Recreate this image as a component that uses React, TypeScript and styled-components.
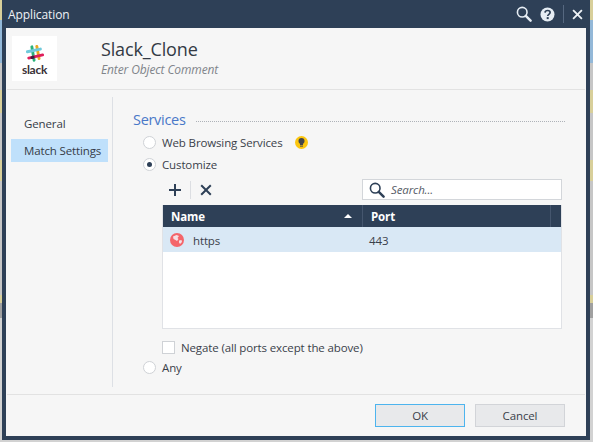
import React from "react";
import styled, { createGlobalStyle } from "styled-components";

const Global = createGlobalStyle`
  html, body { margin: 0; padding: 0; height: 442px; overflow: hidden; }
  body {
    font-family: "Open Sans", "Noto Sans", sans-serif;
    background: linear-gradient(to bottom,
      #d8cf9a 0 20px, #93b8d8 20px 63px, #c6c6c6 63px 90px, #d8cf9a 90px 113px,
      #c6c6c6 113px 160px, #d8cf9a 160px 181px, #c6c6c6 181px 295px, #d8cf9a 295px 303px,
      #a0a0a0 303px 318px, #d2d2d2 318px 442px);
  }
`;

const navy = "#2e4057";

const Dialog = styled.div`
  width: 588px; height: 440px; margin-left: 2px;
  box-sizing: border-box;
  background: ${navy};
  padding: 0 4px 4px;
  display: flex; flex-direction: column;
  color: #3a3f4a; font-size: 11.5px; letter-spacing: -0.13px;
`;
const TitleBar = styled.div`
  height: 28px; flex: none;
  display: flex; align-items: center;
  color: #eef2f6; font-size: 12px; padding-left: 2px; padding-right: 3px;
`;
const TitleText = styled.span`flex: 1; letter-spacing: -0.1px;`;
const TitleIcons = styled.div`display: flex; align-items: center; gap: 8px;`;
const TitleSep = styled.div`width: 1px; height: 18px; background: #566880;`;
const Surface = styled.div`
  flex: 1; min-height: 0; background: #f6f6f6;
  display: flex; flex-direction: column;
`;
const Header = styled.div`
  height: 62px; flex: none; box-sizing: border-box;
  margin: 0 1px; border-bottom: 1px solid #e2e2e2;
  padding: 8px 0 0 5px;
  display: flex; gap: 44px;
`;
const LogoBox = styled.div`
  width: 45px; height: 45px; background: #fff;
  display: flex; flex-direction: column; align-items: center; padding-top: 9px; box-sizing: border-box;
`;
const LogoWord = styled.span`
  font-family: "Lato", sans-serif; font-weight: 700; font-size: 12px; line-height: 11px;
  color: #3b3238; letter-spacing: -0.3px; margin-top: 1px;
`;
const HeaderText = styled.div`display: flex; flex-direction: column;`;
const ObjName = styled.div`font-size: 18px; line-height: 26px; color: #333a44; letter-spacing: -0.15px;`;
const ObjComment = styled.div`font-size: 12px; line-height: 15px; font-style: italic; color: #80848a; letter-spacing: -0.12px;`;
const Main = styled.div`flex: 1; min-height: 0; display: flex; padding-top: 7px;`;
const Sidebar = styled.div`
  width: 97px; flex: none; margin-left: 5px; margin-right: 4px;
  display: flex; flex-direction: column; padding-top: 15px;
`;
const NavItem = styled.div<{ $active?: boolean }>`
  height: 23px; box-sizing: border-box; display: flex; align-items: center; padding-left: 13px;
  white-space: nowrap; color: #363c47;
  background: ${(p) => (p.$active ? "#bfe0fb" : "transparent")};
  & + & { margin-top: 4px; }
`;
const Content = styled.div`
  flex: 1; min-width: 0; height: 290px; box-sizing: border-box;
  border-left: 1px solid #dde0e5;
  padding: 13px 21px 0 20px;
  display: flex; flex-direction: column;
`;
const SectionHead = styled.div`display: flex; align-items: center; gap: 10px; height: 20px; margin-bottom: 1px;`;
const SectionTitle = styled.div`font-size: 14.5px; line-height: 20px; color: #4a78c8; letter-spacing: -0.3px;`;
const Dots = styled.div`flex: 1; border-top: 1px dotted #aeb2b8; margin-top: 2px;`;
const RadioRow = styled.div`
  height: 22px; margin-left: 10px; display: flex; align-items: center; gap: 6px; white-space: nowrap;
`;
const AnyRow = styled(RadioRow)`height: 14px;`;
const Radio = styled.span<{ $on?: boolean }>`
  width: 13px; height: 13px; box-sizing: border-box; border-radius: 50%; flex: none;
  border: 1px solid #cfd2d6; background: #fff; display: flex; align-items: center; justify-content: center;
  &::after { content: ""; width: 5px; height: 5px; border-radius: 50%; background: ${(p) => (p.$on ? navy : "transparent")}; }
`;
const Bulb = styled.svg`margin-left: 6px; flex: none;`;
const Nested = styled.div`margin: 0 3px 0 29px; display: flex; flex-direction: column;`;
const Toolbar = styled.div`display: flex; align-items: center; height: 21px; margin-top: 4px;`;
const ToolGroup = styled.div`flex: 1; display: flex; align-items: center; padding-left: 7px; gap: 9px;`;
const ToolSep = styled.div`width: 1px; height: 18px; background: #dcdee2;`;
const SearchBox = styled.div`
  width: 200px; height: 21px; box-sizing: border-box; background: #fff;
  border: 1px solid #d3d6da; display: flex; align-items: center; padding-left: 6px; gap: 6px;
`;
const SearchText = styled.span`font-style: italic; color: #555b66;`;
const Table = styled.div`
  height: 124px; margin-top: 5px; box-sizing: border-box; background: #fff;
  border: 1px solid #e0e2e6; border-top: 0;
  display: flex; flex-direction: column;
`;
const HeadRow = styled.div`
  height: 22px; background: ${navy}; color: #fff; font-weight: 700;
  display: grid; grid-template-columns: 200px 188px 1fr; align-items: stretch;
`;
const HeadCell = styled.div`
  display: flex; align-items: center; justify-content: space-between;
  padding: 0 10px 0 8px; border-right: 1px solid #45566e;
  &:last-child { border-right: 0; }
`;
const SortUp = styled.span`
  width: 0; height: 0; border-left: 4px solid transparent; border-right: 4px solid transparent;
  border-bottom: 4px solid #fff;
`;
const BodyRow = styled.div`
  height: 25px; background: #d9e8f5; padding-top: 1px; box-sizing: border-box;
  display: grid; grid-template-columns: 199px 1fr; align-items: center;
`;
const NameCell = styled.div`display: flex; align-items: center; gap: 9px; padding-left: 7px;`;
const PortCell = styled.div`padding-left: 7px;`;
const NegateRow = styled.div`display: flex; align-items: center; gap: 6px; height: 26px; margin-top: 5px; white-space: nowrap;`;
const Checkbox = styled.span`width: 13px; height: 13px; box-sizing: border-box; background: #fff; border: 1px solid #cfd2d6; flex: none;`;
const Footer = styled.div`
  height: 42px; flex: none; box-sizing: border-box; margin: 0 1px;
  border-top: 1px solid #e2e2e2;
  display: flex; justify-content: flex-end; align-items: flex-start; gap: 10px; padding: 9px 20px 0 0;
`;
const Button = styled.div<{ $primary?: boolean }>`
  width: 90px; height: 23px; box-sizing: border-box; background: #e8e9eb;
  border: 1px solid ${(p) => (p.$primary ? "#4db4ee" : "#d2d4d8")};
  display: flex; align-items: center; justify-content: center;
`;

const Mag = ({ c, s = 18 }: { c: string; s?: number }) => (
  <svg width={s} height={s} viewBox="0 0 18 18" fill="none">
    <circle cx="7" cy="7" r="5.4" stroke={c} strokeWidth="1.8" />
    <path d="M11 11 16.4 16.4" stroke={c} strokeWidth="2.8" strokeLinecap="round" />
  </svg>
);
const Cross = ({ c, s = 12, w = 2 }: { c: string; s?: number; w?: number }) => (
  <svg width={s} height={s} viewBox="0 0 12 12"><path d="M1.2 1.2 10.8 10.8M10.8 1.2 1.2 10.8" stroke={c} strokeWidth={w} /></svg>
);

export default function App() {
  return (
    <>
      <Global />
      <Dialog>
        <TitleBar>
          <TitleText>Application</TitleText>
          <TitleIcons>
            <Mag c="#e6edf4" s={16} />
            <svg width="15" height="15" viewBox="0 0 15 15">
              <circle cx="7.5" cy="7.5" r="7" fill="#e6edf4" />
              <path d="M5 5.6c.2-1.5 1.3-2.1 2.6-2.1 1.4 0 2.5.8 2.5 2 0 1.9-2.4 1.8-2.4 3.6" fill="none" stroke={navy} strokeWidth="1.7" />
              <rect x="6.7" y="10.1" width="2" height="2" fill={navy} />
            </svg>
            <TitleSep />
            <Cross c="#eef2f6" s={11} />
          </TitleIcons>
        </TitleBar>
        <Surface>
          <Header>
            <LogoBox>
              <svg width="18" height="18" viewBox="0 0 20 20">
                <g strokeWidth="3.2" strokeLinecap="round">
                  <path d="M6.5 2 9 17" stroke="#2ab27b" />
                  <path d="M12 1.5 14.5 15" stroke="#e9a820" />
                  <path d="M1.5 7.5 16 4.5" stroke="#70cadb" />
                  <path d="M3 14.5 18.5 11" stroke="#df1e5a" />
                  <path d="M6.5 14 8 13.6" stroke="#3e1d3f" />
                </g>
              </svg>
              <LogoWord>slack</LogoWord>
            </LogoBox>
            <HeaderText>
              <ObjName>Slack_Clone</ObjName>
              <ObjComment>Enter Object Comment</ObjComment>
            </HeaderText>
          </Header>
          <Main>
            <Sidebar>
              <NavItem>General</NavItem>
              <NavItem $active>Match Settings</NavItem>
            </Sidebar>
            <Content>
              <SectionHead>
                <SectionTitle>Services</SectionTitle>
                <Dots />
              </SectionHead>
              <RadioRow>
                <Radio />
                <span>Web Browsing Services</span>
                <Bulb width="13" height="13" viewBox="0 0 13 13">
                  <circle cx="6.5" cy="6.5" r="6.5" fill="#fcc60e" />
                  <circle cx="6.5" cy="5" r="3" fill="#44464c" />
                  <rect x="5" y="7" width="3" height="2" fill="#44464c" />
                  <rect x="5" y="9.6" width="3" height="1" fill="#44464c" />
                </Bulb>
              </RadioRow>
              <RadioRow>
                <Radio $on />
                <span>Customize</span>
              </RadioRow>
              <Nested>
                <Toolbar>
                  <ToolGroup>
                    <svg width="12" height="12" viewBox="0 0 12 12"><path d="M6 0V12M0 6H12" stroke={navy} strokeWidth="2" /></svg>
                    <ToolSep />
                    <Cross c={navy} s={12} />
                  </ToolGroup>
                  <SearchBox>
                    <Mag c={navy} s={16} />
                    <SearchText>Search...</SearchText>
                  </SearchBox>
                </Toolbar>
                <Table>
                  <HeadRow>
                    <HeadCell>Name<SortUp /></HeadCell>
                    <HeadCell>Port</HeadCell>
                    <HeadCell />
                  </HeadRow>
                  <BodyRow>
                    <NameCell>
                      <svg width="14" height="14" viewBox="0 0 14 14">
                        <circle cx="7" cy="7" r="7" fill="#f4656a" />
                        <path d="M3 3.5 6.5 2 9 3 7.5 5 8.5 6 7 8 5.5 7 3.5 6ZM9 7.5l2.5-.5.5 2-2 2-1-1.5Z" fill="#f6dfe4" />
                      </svg>
                      https
                    </NameCell>
                    <PortCell>443</PortCell>
                  </BodyRow>
                </Table>
                <NegateRow>
                  <Checkbox />
                  <span>Negate (all ports except the above)</span>
                </NegateRow>
              </Nested>
              <AnyRow>
                <Radio />
                <span>Any</span>
              </AnyRow>
            </Content>
          </Main>
          <Footer>
            <Button $primary>OK</Button>
            <Button>Cancel</Button>
          </Footer>
        </Surface>
      </Dialog>
    </>
  );
}
